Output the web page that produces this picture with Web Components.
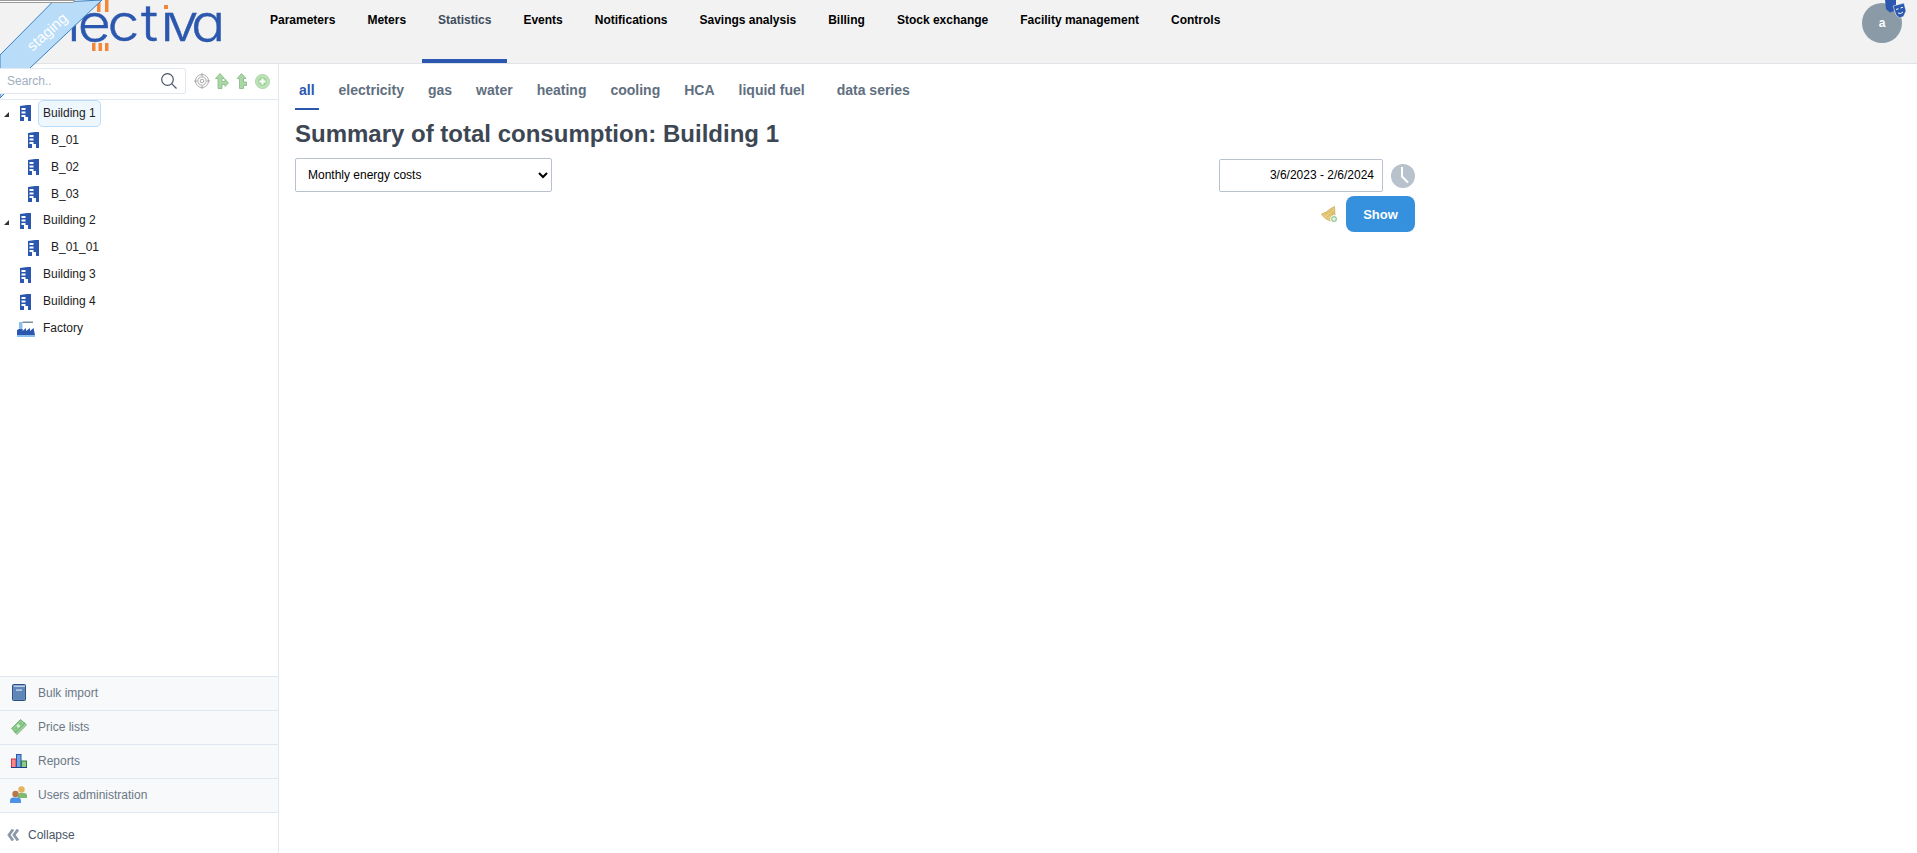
<!DOCTYPE html>
<html lang="en"><head><meta charset="utf-8"><title>Statistics</title>
<style>
html,body{margin:0;height:100%;background:#fff}
body{font:12px "Liberation Sans",Arial,sans-serif;overflow:hidden}
</style></head><body>
<app-shell>
  <app-header slot="header">
    <nav-item>Parameters</nav-item><nav-item>Meters</nav-item><nav-item active>Statistics</nav-item><nav-item>Events</nav-item><nav-item>Notifications</nav-item><nav-item>Savings analysis</nav-item><nav-item>Billing</nav-item><nav-item>Stock exchange</nav-item><nav-item>Facility management</nav-item><nav-item>Controls</nav-item>
  </app-header>
  <side-bar slot="side">
    <tree-node slot="tree" toggle selected>Building 1</tree-node>
    <tree-node slot="tree" child>B_01</tree-node>
    <tree-node slot="tree" child>B_02</tree-node>
    <tree-node slot="tree" child>B_03</tree-node>
    <tree-node slot="tree" toggle>Building 2</tree-node>
    <tree-node slot="tree" child>B_01_01</tree-node>
    <tree-node slot="tree">Building 3</tree-node>
    <tree-node slot="tree">Building 4</tree-node>
    <tree-node slot="tree" icon="factory">Factory</tree-node>
    <side-link slot="links" icon="book">Bulk import</side-link>
    <side-link slot="links" icon="money">Price lists</side-link>
    <side-link slot="links" icon="chart">Reports</side-link>
    <side-link slot="links" icon="users">Users administration</side-link>
  </side-bar>
  <report-panel slot="main"></report-panel>
</app-shell>
<script>
const ICONS={
 building:`<svg width="11" height="16" viewBox="0 0 11 16"><path fill="#2b58ae" d="M0 1 7 0h4v16H8v-4H4v4H0z"/><path fill="#fff" d="M1.500 3H5.500v2H1.500zM1.500 6.500H5.500v2H1.500zM1.500 10H5.500v2H1.500z"/></svg>`,
 factory:`<svg width="18" height="17" viewBox="0 0 18 17"><path fill="#8cbfe9" d="M2 2h3.500v9H2z"/><path fill="#7d8da0" d="M5.500 1.500H16V3H5.500z"/><path fill="#2b58ae" d="M0 15V10l2-1h3.500v2L9 8v3l4-3v3l3.500-3 1.500 7z"/><path fill="#8cbfe9" d="M0 15h18v2H0z"/></svg>`,
 book:`<svg width="14" height="17" viewBox="0 0 14 17"><rect x=".5" y=".5" width="13" height="16" rx="1" fill="#6a8fbd" stroke="#2c4f82"/><rect x="2" y="1.500" width="11" height="1.500" fill="#b8cde3"/><rect x="2" y="3" width="10.500" height="12.500" fill="#5f86b8"/><rect x="4" y="5.500" width="6" height="1.200" fill="#dbe7f3"/></svg>`,
 money:`<svg width="16" height="16" viewBox="0 0 16 16"><path fill="#a4d6a4" stroke="#63a863" stroke-width=".7" d="M3 12.500 12.500 3l3 3L6 15.500z"/><path fill="#7cc07c" stroke="#63a863" stroke-width=".7" d="M.500 9.500 9.500.500l4.500 4L5 13.500z"/><path fill="none" stroke="#b7e0b7" stroke-width=".7" d="M2.500 9.500 9.500 2.500l2.500 2L5 11.500z"/><circle cx="7.300" cy="7" r="1.800" fill="#d5efd5"/></svg>`,
 chart:`<svg width="16" height="14" viewBox="0 0 16 14"><rect x=".5" y="5" width="4.500" height="8.500" fill="#f58a8e" stroke="#d3343f"/><rect x="5.500" y=".5" width="4.500" height="13" fill="#6fa3e2" stroke="#2b58ae"/><rect x="10.500" y="7" width="5" height="6.500" fill="#8ccb8c" stroke="#2f7d3f"/><path stroke="#1d3f8c" d="M0 13.500h16"/></svg>`,
 users:`<svg width="17" height="17" viewBox="0 0 17 17"><circle cx="11.500" cy="3.500" r="3.200" fill="#e6b45c"/><path fill="#7dbb6f" d="M8 12V9q0-2 2-2h4q3 0 3 2.500V12z"/><circle cx="5.500" cy="8" r="3.200" fill="#b9784a"/><path fill="#4d93e3" d="M0 17v-2q0-3.500 3-3.500h5q3 0 3 3.500v2z"/></svg>`,
 target:`<svg width="16" height="16" viewBox="0 0 16 16" fill="none" stroke="#a9a9a9"><circle cx="8" cy="8" r="6.500"/><circle cx="8" cy="8" r="4.200"/><circle cx="8" cy="8" r="1.800"/><path d="M8 0v3M8 13v3M0 8h3M13 8h3"/></svg>`,
 forkboth:`<svg width="14" height="16" viewBox="0 0 14 16"><path fill="#a9d8a5" stroke="#86b883" stroke-width=".8" d="M5 .5 9.500 5.500H7v3h3V6l3.500 4L10 13.500V11.500H7V15.500H3V5.500H.5z"/></svg>`,
 forkone:`<svg width="10" height="16" viewBox="0 0 10 16"><path fill="#a9d8a5" stroke="#86b883" stroke-width=".8" d="M4.500.5 9 5.500H6.500V9h3v3.500h-3v3h-4v-10H.2z"/></svg>`,
 plus:`<svg width="15" height="15" viewBox="0 0 15 15"><circle cx="7.500" cy="7.500" r="7" fill="#bfe3bb" stroke="#a9d3a5"/><circle cx="7.500" cy="7.500" r="4.500" fill="#a2d59d"/><path stroke="#fff" stroke-width="2" d="M7.500 4.500v6M4.500 7.500h6"/></svg>`,
 search:`<svg width="16" height="16" viewBox="0 0 16 16" fill="none" stroke="#4a5568" stroke-width="1.200"><circle cx="6.500" cy="6.500" r="5.800"/><path d="M10.800 10.800l4.700 4.700"/></svg>`,
 clock:`<svg width="24" height="24" viewBox="0 0 24 24"><circle cx="12" cy="12" r="12" fill="#b8c2cc"/><path stroke="#fff" stroke-width="2" fill="none" d="M11 3v9.500l6 6"/></svg>`,
 broom:`<svg width="17" height="17" viewBox="0 0 17 17"><path fill="#e8cd84" stroke="#c9a548" stroke-width=".7" d="M13.500.5 14 9l-3.500 6Q4 14 .5 8 5 7 9 3z"/><path stroke="#c9a548" stroke-width=".7" d="M12 3 3.500 9M12.500 5 6 11.500M13 6 8.500 13"/><circle cx="13" cy="13" r="3.500" fill="#8fc68a" stroke="#fff"/><path stroke="#fff" d="M13 11v4M11 13h4"/></svg>`,
 chev:`<svg width="12" height="12" viewBox="0 0 12 12" fill="none" stroke="#8d99a8" stroke-width="2.800"><path d="M6 .5 2 6 6 11.500M11 .5 7 6 11 11.500"/></svg>`,
 masks:`<svg width="21" height="19" viewBox="0 0 21 19"><path fill="#2b58ae" d="M0 0h11v5l-2 6-4 1.500L1 9z"/><path fill="#2b58ae" stroke="#f2f2f2" stroke-width=".6" d="M8 6 19 3l2 8-2.500 5.500-4 1.500-3.500-3z"/><path stroke="#fff" fill="none" d="M11 9.500l2.500-.7M15.500 8l2.500-.7M13 13q3 1.500 5-1"/></svg>`
};
function def(name,css,html){
  customElements.define(name,class extends HTMLElement{
    constructor(){super();const r=this.attachShadow({mode:"open"});r.innerHTML=`<style>${css}</style>${html}`;}
    connectedCallback(){
      this.shadowRoot.querySelectorAll("[data-i]").forEach(e=>{e.innerHTML=ICONS[e.dataset.i==="attr"?(this.getAttribute("icon")||"building"):e.dataset.i]});
    }
  });
}
def("app-shell",`:host{display:flex;flex-direction:column;height:853px}
 .body{display:flex;flex:1;min-height:0}`,
 `<slot name="header"></slot><div class="body"><slot name="side"></slot><slot name="main"></slot></div>`);
def("app-header",`:host{display:flex;flex:none;height:63px;background:#f2f2f2;border-bottom:1px solid #dfe3e8;position:relative;font:bold 12px "Liberation Sans",Arial,sans-serif}
 .logo{width:254px;flex:none;height:63px;overflow:hidden}
 .logo svg{display:block}
 nav{display:flex}
 .sp{flex:1}
 .av{flex:none;width:40px;height:40px;border-radius:50%;background:#8a9aa7;color:#fff;margin:3px 15px 0 0;display:flex;align-items:center;justify-content:center;position:relative}
 .m{position:absolute;left:23px;top:-3px;line-height:0}`,
 `<div class="logo"><svg width="254" height="63" viewBox="0 0 254 63">
   <text transform="scale(1.120 1)" y="41" x="42 69.500 96 126 143.300 149 170.500" font-family="Inter,'DejaVu Sans',sans-serif" font-weight="300" font-size="51" fill="#2b58ae" stroke="#2b58ae" stroke-width=".4">nectıvɑ</text>
   <g fill="#f2873a"><rect x="97" y="0" width="3.500" height="12"/><rect x="105" y="0" width="3.500" height="12"/><rect x="92" y="43" width="3.500" height="8"/><rect x="98.500" y="43" width="3.500" height="8"/><rect x="105" y="43" width="3.500" height="8"/><rect x="164" y="5" width="4" height="4"/></g>
 </svg></div><nav><slot></slot></nav><div class="sp"></div><div class="av">a<span class="m" data-i="masks"></span></div>`);
def("nav-item",`:host{display:block;padding:13px 16px 0;height:63px;box-sizing:border-box;color:#000;border-bottom:4px solid transparent;line-height:14px;white-space:nowrap}
 :host([active]){color:#3d4b5c;border-bottom-color:#2b58ae}`,`<slot></slot>`);
def("side-bar",`:host{display:flex;flex-direction:column;flex:none;width:278px;border-right:1px solid #e2e8f0;position:relative;background:#fff}
 .ribbon{position:absolute;left:0;top:-64px;width:110px;height:110px;pointer-events:none;z-index:0}
 .tab{position:absolute;left:-2px;top:-64px;width:77px;height:3px;background:#fff;border:1px solid #9a9a9a;border-radius:0 0 4px 0;box-sizing:border-box;z-index:2}
 .st{position:absolute;left:23px;top:-41px;color:#fff;font:15px/18px "Liberation Sans",Arial,sans-serif;transform:rotate(-42deg);z-index:2}
 .top{display:flex;align-items:center;height:34px;border-bottom:1px solid #e2e8f0;flex:none;position:relative;z-index:1;padding-bottom:1px}
 .box{width:186px;height:26px;box-sizing:border-box;background:#fff;border:1px solid #e2e8f0;border-left:0;display:flex;align-items:center;justify-content:space-between;padding:0 8px 0 7px;color:#a0aec0;flex:none;border-radius:0 3px 3px 0}
 .box span{line-height:0}
 .tools{display:flex;align-items:center;margin-left:8px;line-height:0}
 .tools span{margin-right:8px}
 .tools span:first-child{margin-right:5px}
 .tree{flex:1;min-height:0;display:block}
 .links{flex:none}
 .col{height:41px;box-sizing:border-box;padding:4px 0 0 7px;display:flex;align-items:center;gap:9px;color:#4a5568;border-top:1px solid #e2e8f0;line-height:0}
 .col b{font:12px/14px "Liberation Sans",Arial,sans-serif}`,
 `<svg class="ribbon" viewBox="0 0 110 110"><path d="M52 2.500 102 0 30 68 0 98V55z" fill="#b9dcf9" stroke="#3a7fc4"/></svg><div class="tab"></div><div class="st">staging</div>
 <div class="top"><div class="box">Search..<span data-i="search"></span></div><div class="tools"><span data-i="target"></span><span data-i="forkboth"></span><span data-i="forkone"></span><span data-i="plus"></span></div></div>
 <div class="tree"><slot name="tree"></slot></div>
 <div class="links"><slot name="links"></slot></div>
 <div class="col"><span data-i="chev"></span><b>Collapse</b></div>`);
def("tree-node",`:host{display:flex;align-items:center;height:26.875px;color:#222;position:relative;padding-left:20px;box-sizing:border-box}
 :host([child]){padding-left:28px}
 .ic{width:11px;height:16px;line-height:0;flex:none;display:flex;justify-content:center;align-items:center}
 :host([icon]) .ic{margin-left:-3px;width:18px;margin-right:-4px}
 .t{margin-left:7px;padding:0 4px;height:27px;line-height:25px;border:1px solid transparent;border-radius:5px;box-sizing:border-box;white-space:nowrap}
 :host([selected]) .t{background:#eff7fe;border-color:#b9dcf9}
 .arr{display:none;position:absolute;left:4px;top:12px;width:0;height:0;border-left:5px solid transparent;border-bottom:5px solid #333}
 :host([toggle]) .arr{display:block}`,
 `<i class="arr"></i><span class="ic" data-i="attr"></span><span class="t"><slot></slot></span>`);
def("side-link",`:host{display:flex;align-items:center;height:34px;box-sizing:border-box;padding-bottom:2px;border-top:1px solid #e2e8f0;background:#f7f9fb;color:#6b7785;padding-left:10px}
 .ic{width:17px;display:flex;justify-content:center;line-height:0;margin-right:11px}`,
 `<span class="ic" data-i="attr"></span><slot></slot>`);
def("report-panel",`:host{display:block;flex:1;min-width:0;padding-left:16px;background:#fff}
 .w{width:1120px}
 .tabs{display:flex;height:46px;font:bold 14px "Liberation Sans",Arial,sans-serif;color:#5f6f80;box-sizing:border-box}
 .tabs a{display:block;padding:18px 4px 0;height:46px;box-sizing:border-box;margin-right:16px;line-height:16px}
 .tabs a.on{color:#2b58ae;border-bottom:2px solid #2b58ae}
 .tabs a.ds{margin-left:8px}
 h1{font:bold 24px/28px "Liberation Sans",Arial,sans-serif;color:#3d4653;margin:10px 0 0}
 .row{display:flex;justify-content:space-between;align-items:flex-start;margin-top:10px}
 select{width:257px;height:34px;font:12px "Liberation Sans",Arial,sans-serif;color:#000;background:#fff;border:1px solid #b8c2cc;border-radius:2px;padding:0 8px;display:block}
 .dw{display:flex;align-items:center;gap:8px;margin-top:1px}
 .date{width:164px;height:33px;box-sizing:border-box;border:1px solid #b8c2cc;border-radius:2px;text-align:right;line-height:31px;padding-right:8px;color:#000}
 .ci{line-height:0}
 .act{display:flex;justify-content:flex-end;align-items:center;gap:8px;margin-top:4px}
 button{width:69px;height:36px;border:0;border-radius:8px;background:#3590de;color:#fff;font:bold 13px "Liberation Sans",Arial,sans-serif;padding:0}
 .br{line-height:0}`,
 `<div class="w"><div class="tabs"><a class="on">all</a><a>electricity</a><a>gas</a><a>water</a><a>heating</a><a>cooling</a><a>HCA</a><a>liquid fuel</a><a class="ds">data series</a></div>
 <h1>Summary of total consumption: Building 1</h1>
 <div class="row"><select><option>Monthly energy costs</option></select><div class="dw"><div class="date">3/6/2023 - 2/6/2024</div><span class="ci" data-i="clock"></span></div></div>
 <div class="act"><span class="br" data-i="broom"></span><button>Show</button></div></div>`);
</script>
</body></html>
